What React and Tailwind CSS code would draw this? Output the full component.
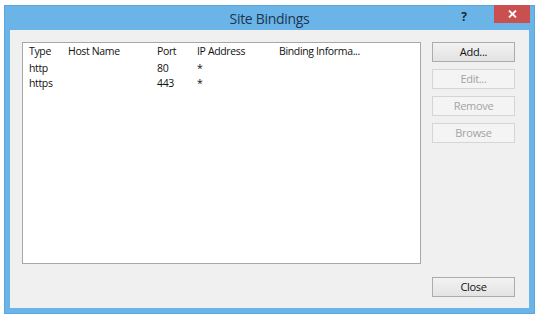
import React from "react";

const bindings = [
    { type: "http", host: "", port: "80", ip: "*" },
    { type: "https", host: "", port: "443", ip: "*" },
];

const Btn = ({ label, disabled }) => (
    <div
        className={`h-[20px] w-[83px] flex items-center justify-center border text-[11px] tracking-[-0.3px] ${
            disabled
                ? "border-[#d5d5d5] bg-[#f4f4f4] text-[#a3a3a3]"
                : "border-[#acacac] bg-gradient-to-b from-[#f2f2f2] to-[#e3e3e3] text-[#111]"
        }`}
    >
        {label}
    </div>
);

const Row = ({ cells, header }) => (
    <div className={`flex items-center ${header ? "h-[18px]" : "h-[15px]"}`}>
        <div className="w-[39px] pl-[6px] box-content">{cells[0]}</div>
        <div className="w-[89px]">{cells[1]}</div>
        <div className="w-[40px]">{cells[2]}</div>
        <div className="w-[82px]">{cells[3]}</div>
        <div className="flex-1">{cells[4]}</div>
    </div>
);

export default function App() {
    return (
        <div className="w-[540px] h-[319px] bg-white pt-[5px] pl-[4px]" style={{ fontFamily: '"Open Sans", "Noto Sans", sans-serif' }}>
            <div className="w-[531px] h-[309px] bg-[#6ab4e8] border border-[#5aa6de] flex flex-col">
                {/* title bar */}
                <div className="relative h-[24px] flex items-center justify-center">
                    <span className="text-[14px] text-[#1b3650] tracking-[-0.3px]">Site Bindings</span>
                    <span className="absolute right-[67px] top-[2px] text-[12px] font-bold text-[#1b2a3a]">?</span>
                    <div className="absolute right-[4px] top-[-1px] w-[36px] h-[18px] bg-[#c9504e] flex items-center justify-center">
                        <svg width="9" height="8" viewBox="0 0 9 8">
                            <path d="M1 0.5 L8 7.5 M8 0.5 L1 7.5" stroke="#fff" strokeWidth="1.8" />
                        </svg>
                    </div>
                </div>
                {/* client */}
                <div className="mx-[5px] mb-[5px] flex-1 bg-[#f0f0f0] pl-[12px] pt-[12px] pr-[14px] flex flex-col text-[10.5px] tracking-[-0.35px] text-[#111]">
                    <div className="flex gap-[11px]">
                        <div className="w-[400px] h-[222px] bg-white border border-[#a8a8a8]">
                            <Row header cells={["Type", "Host Name", "Port", "IP Address", "Binding Informa..."]} />
                            {bindings.map((b) => (
                                <Row key={b.type} cells={[b.type, b.host, b.port, b.ip, ""]} />
                            ))}
                        </div>
                        <div className="flex flex-col gap-[7px]">
                            <Btn label="Add..." />
                            <Btn label="Edit..." disabled />
                            <Btn label="Remove" disabled />
                            <Btn label="Browse" disabled />
                        </div>
                    </div>
                    <div className="flex justify-end mt-[13px]">
                        <Btn label="Close" />
                    </div>
                </div>
            </div>
        </div>
    );
}
